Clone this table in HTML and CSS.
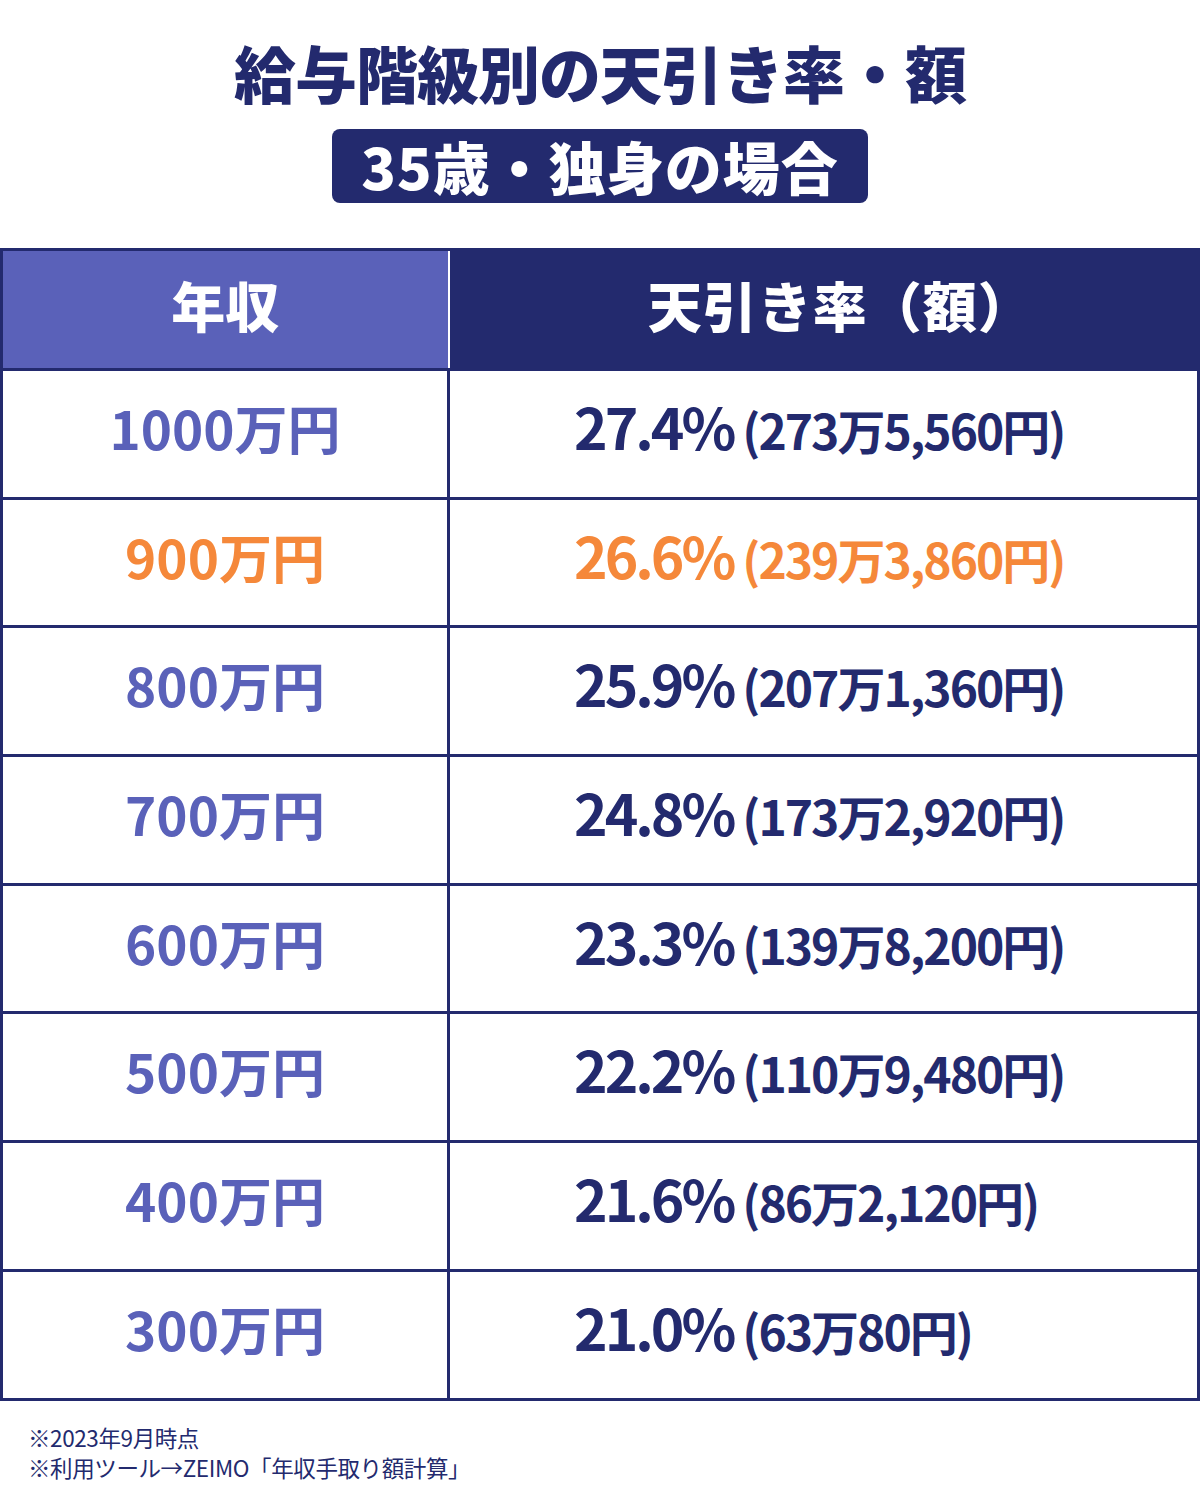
FILE: index.html
```html
<!DOCTYPE html>
<html lang="ja">
<head>
<meta charset="utf-8">
<title>給与階級別の天引き率・額</title>
<link rel="stylesheet" href="styles.css">
</head>
<body>
<div class="page">
  <header class="head">
    <h1 class="title">給与階級別の天引き率・額</h1>
    <div class="badge">35歳・独身の場合</div>
  </header>
  <table class="tbl">
    <thead>
      <tr>
        <th class="th-income">年収</th>
        <th class="th-rate">天引き率（額）</th>
      </tr>
    </thead>
    <tbody>
      <tr><td class="income">1000万円</td><td class="rate"><span class="pct">27.4%</span><span class="amt">(273万5,560円)</span></td></tr>
      <tr class="hl"><td class="income">900万円</td><td class="rate"><span class="pct">26.6%</span><span class="amt">(239万3,860円)</span></td></tr>
      <tr><td class="income">800万円</td><td class="rate"><span class="pct">25.9%</span><span class="amt">(207万1,360円)</span></td></tr>
      <tr><td class="income">700万円</td><td class="rate"><span class="pct">24.8%</span><span class="amt">(173万2,920円)</span></td></tr>
      <tr><td class="income">600万円</td><td class="rate"><span class="pct">23.3%</span><span class="amt">(139万8,200円)</span></td></tr>
      <tr><td class="income">500万円</td><td class="rate"><span class="pct">22.2%</span><span class="amt">(110万9,480円)</span></td></tr>
      <tr><td class="income">400万円</td><td class="rate"><span class="pct">21.6%</span><span class="amt">(86万2,120円)</span></td></tr>
      <tr><td class="income">300万円</td><td class="rate"><span class="pct">21.0%</span><span class="amt">(63万80円)</span></td></tr>
    </tbody>
  </table>
  <footer class="notes">
    <p>※2023年9月時点</p>
    <p>※利用ツール→ZEIMO「年収手取り額計算」</p>
  </footer>
</div>
</body>
</html>
```
FILE: styles.css
```css
* { box-sizing: border-box; }
html, body { margin: 0; padding: 0; background: #fff; }
body {
  font-family: "Noto Sans CJK JP", "Noto Sans", sans-serif;
  color: #232a6e;
  width: 1200px;
}
.page { width: 1200px; }
.head {
  display: flex;
  flex-direction: column;
  align-items: center;
  padding-top: 31px;
  height: 248px;
}
.title {
  margin: 0;
  font-size: 62px;
  font-weight: 900;
  line-height: 82px;
  color: #232a6e;
  letter-spacing: -1px;
}
.badge {
  margin-top: 16px;
  width: 536px;
  height: 74px;
  background: #232a6e;
  color: #fff;
  border-radius: 8px;
  font-size: 57px;
  font-weight: 900;
  line-height: 72px;
  text-align: center;
  letter-spacing: 1px;
}
.tbl {
  width: 1200px;
  border-collapse: collapse;
  border: 3px solid #232a6e;
  table-layout: fixed;
}
.th-income, .th-rate {
  height: 120px;
  color: #fff;
  font-size: 54px;
  font-weight: 900;
  text-align: center;
  padding: 0 0 10px;
}
.th-income {
  width: 447px;
  background: #5a61b9;
  border-right: 2px solid #fff;
}
.tbl .th-rate { background: #232a6e; padding-left: 34px; letter-spacing: 1px; }
.tbl td {
  height: 128.7px;
  border: 3px solid #232a6e;
  padding: 0 0 14px;
  vertical-align: middle;
}
.income {
  text-align: center;
  color: #5a61b9;
  font-size: 53px;
  font-weight: 700;
  letter-spacing: 0;
}
.tbl .rate {
  padding: 0 0 18px 124px;
  color: #232a6e;
  white-space: nowrap;
}
.pct {
  font-size: 57px;
  font-weight: 700;
  letter-spacing: -3px;
}
.amt {
  font-size: 48px;
  font-weight: 700;
  letter-spacing: -2px;
  margin-left: 9px;
}
.hl .income, .hl .rate { color: #f5883a; }
.notes {
  padding: 21px 0 0 28px;
  font-size: 22.5px;
  line-height: 30px;
  color: #232a6e;
}
.notes p { margin: 0; letter-spacing: -0.4px; }
```
